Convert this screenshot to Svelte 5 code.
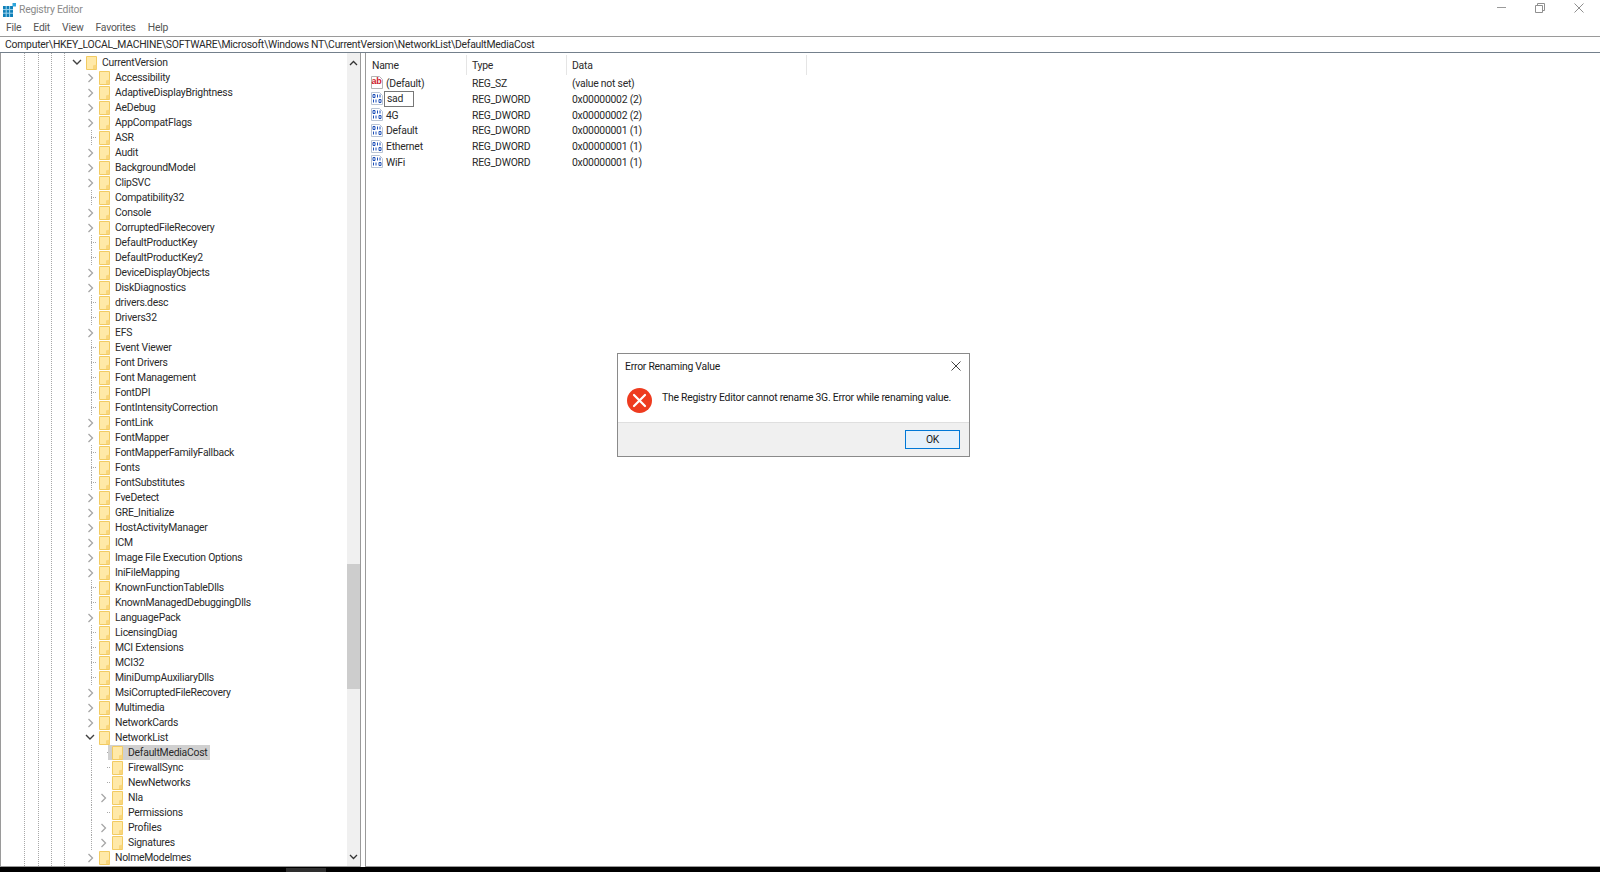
<script>
  const names = [
    ['Accessibility',1],['AdaptiveDisplayBrightness',1],['AeDebug',1],['AppCompatFlags',1],['ASR',0],['Audit',1],['BackgroundModel',1],['ClipSVC',1],['Compatibility32',0],['Console',1],['CorruptedFileRecovery',1],['DefaultProductKey',0],['DefaultProductKey2',0],['DeviceDisplayObjects',1],['DiskDiagnostics',1],['drivers.desc',0],['Drivers32',0],['EFS',1],['Event Viewer',0],['Font Drivers',0],['Font Management',0],['FontDPI',0],['FontIntensityCorrection',0],['FontLink',1],['FontMapper',1],['FontMapperFamilyFallback',0],['Fonts',0],['FontSubstitutes',0],['FveDetect',1],['GRE_Initialize',1],['HostActivityManager',1],['ICM',1],['Image File Execution Options',1],['IniFileMapping',1],['KnownFunctionTableDlls',0],['KnownManagedDebuggingDlls',0],['LanguagePack',1],['LicensingDiag',0],['MCI Extensions',0],['MCI32',0],['MiniDumpAuxiliaryDlls',0],['MsiCorruptedFileRecovery',1],['Multimedia',1],['NetworkCards',1]
  ];
  const rows = [
    { n: 'CurrentVersion', lvl: 0, k: 'open' },
    ...names.map(([n, c]) => ({ n, lvl: 1, k: c ? 'closed' : 'leaf' })),
    { n: 'NetworkList', lvl: 1, k: 'open' },
    { n: 'DefaultMediaCost', lvl: 2, k: 'leaf', sel: true },
    { n: 'FirewallSync', lvl: 2, k: 'leaf' },
    { n: 'NewNetworks', lvl: 2, k: 'leaf' },
    { n: 'Nla', lvl: 2, k: 'closed' },
    { n: 'Permissions', lvl: 2, k: 'leaf' },
    { n: 'Profiles', lvl: 2, k: 'closed' },
    { n: 'Signatures', lvl: 2, k: 'closed' },
    { n: 'NolmeModelmes', lvl: 1, k: 'closed' }
  ];
  const values = [
    { name: '(Default)', type: 'REG_SZ', data: '(value not set)', sz: true },
    { name: 'sad', type: 'REG_DWORD', data: '0x00000002 (2)', edit: true },
    { name: '4G', type: 'REG_DWORD', data: '0x00000002 (2)' },
    { name: 'Default', type: 'REG_DWORD', data: '0x00000001 (1)' },
    { name: 'Ethernet', type: 'REG_DWORD', data: '0x00000001 (1)' },
    { name: 'WiFi', type: 'REG_DWORD', data: '0x00000001 (1)' }
  ];
</script>

<div class="window">
  <header class="title">
    <svg class="logo" width="13" height="14" viewBox="0 0 13 14">
      <rect x="0" y="3" width="10" height="11" fill="#0f7fb8"/>
      <path d="M3.200 3v11M6.600 3v11M0 6.600h10M0 10.200h10" stroke="#9fd6ee" stroke-width="1"/>
      <rect x="9.500" y="0" width="3.500" height="3.500" fill="#2ea6dc"/>
    </svg>
    <span class="title-text">Registry Editor</span>
    <div class="controls">
      <svg width="9" height="2" viewBox="0 0 9 2"><path d="M0 .5h9" stroke="#9a9a9a"/></svg>
      <svg width="10" height="10" viewBox="0 0 10 10" fill="none" stroke="#8f8f8f"><path d="M.5 2.500h7v7h-7zM2.500 2.500v-2h7v7h-2"/></svg>
      <svg width="10" height="10" viewBox="0 0 10 10" fill="none" stroke="#8f8f8f"><path d="M.5.5l9 9M9.500.5l-9 9"/></svg>
    </div>
  </header>

  <nav class="menu">
    <span>File</span><span>Edit</span><span>View</span><span>Favorites</span><span>Help</span>
  </nav>

  <div class="address">Computer\HKEY_LOCAL_MACHINE\SOFTWARE\Microsoft\Windows NT\CurrentVersion\NetworkList\DefaultMediaCost</div>

  <main class="panes">
    <section class="tree-pane">
      <div class="tree">
        {#each rows as r}
          <div class="row" class:lvl1={r.lvl === 1} class:lvl2={r.lvl === 2}>
            <span class="exp">
              {#if r.k === 'closed'}
                <svg class="chev" width="7" height="10" viewBox="0 0 7 10" fill="none" stroke="#a6a6a6" stroke-width="1.3"><path d="M1.500 1l4 4-4 4"/></svg>
              {:else if r.k === 'open'}
                <svg class="chev-open" width="10" height="7" viewBox="0 0 10 7" fill="none" stroke="#404040" stroke-width="1.4"><path d="M1 1l4 4 4-4"/></svg>
              {:else}
                <i class="stub"></i>
              {/if}
            </span>
            <span class="item" class:sel={r.sel}>
              <svg class="folder" width="11" height="14" viewBox="0 0 11 14">
                <path d="M.5.5h10v13H.5z" fill="#ffe9a8" stroke="#f2cb62"/>
                <path d="M7 13V9.500l3.500-1V13z" fill="#f9d67c"/>
              </svg>
              <span class="label">{r.n}</span>
            </span>
          </div>
        {/each}
      </div>
      <div class="scrollbar">
        <svg width="9" height="6" viewBox="0 0 9 6" fill="none" stroke="#333" stroke-width="1.3"><path d="M1 5l3.500-3.500L8 5"/></svg>
        <div class="thumb"></div>
        <svg class="down" width="9" height="6" viewBox="0 0 9 6" fill="none" stroke="#333" stroke-width="1.3"><path d="M1 1l3.500 3.500L8 1"/></svg>
      </div>
    </section>

    <section class="list-pane">
      <div class="head">
        <span class="c1">Name</span><span class="c2">Type</span><span class="c3">Data</span>
      </div>
      {#each values as v}
        <div class="vrow">
          <span class="c1 namecell">
            {#if v.sz}
              <svg class="vicon" width="12" height="13" viewBox="0 0 12 13">
                <path d="M.5.5h8l3 3v9H.5z" fill="#fff" stroke="#b4b4b4"/>
                <text x="0.500" y="8" font-size="9" font-weight="700" fill="#d0202c" font-family="Liberation Sans">ab</text>
              </svg>
            {:else}
              <svg class="vicon" width="12" height="13" viewBox="0 0 12 13">
                <path d="M.5.5h8l3 3v9H.5z" fill="#fff" stroke="#b9c4d4"/>
                <path d="M2 2.500h2v3H2zM6.500 2.500v3M9 2.500v3M2.500 7.500v3M5 7.500v3M8 7.500h2v3H8z" fill="none" stroke="#1c4fb8" stroke-width="1"/>
              </svg>
            {/if}
            {#if v.edit}
              <span class="edit">{v.name}</span>
            {:else}
              <span class="vname">{v.name}</span>
            {/if}
          </span>
          <span class="c2">{v.type}</span>
          <span class="c3">{v.data}</span>
        </div>
      {/each}
    </section>
  </main>

  <footer class="taskbar"><span class="task"></span></footer>

  <div class="dialog">
    <div class="dlg-title">
      <span>Error Renaming Value</span>
      <svg width="10" height="10" viewBox="0 0 10 10" fill="none" stroke="#444"><path d="M.5.5l9 9M9.500.5l-9 9"/></svg>
    </div>
    <div class="dlg-body">
      <svg class="err" width="25" height="25" viewBox="0 0 25 25">
        <circle cx="12.500" cy="12.500" r="12.500" fill="#ee3b1f"/>
        <path d="M7 7l11 11M18 7L7 18" stroke="#fff" stroke-width="2.200" stroke-linecap="round"/>
      </svg>
      <p>The Registry Editor cannot rename 3G. Error while renaming value.</p>
    </div>
    <div class="dlg-foot"><button>OK</button></div>
  </div>
</div>

<style>
  :global(body) { margin: 0; background: #fff; }
  .window {
    position: relative;
    width: 1600px; height: 872px; overflow: hidden;
    display: flex; flex-direction: column;
    font: 10.4px/15px "Roboto", "Open Sans", sans-serif;
    letter-spacing: -0.24px;
    color: #2a2a2a; background: #fff;
  }
  .title { height: 19px; display: flex; align-items: center; padding-left: 3px; flex: none; }
  .logo { margin-right: 3px; }
  .title-text { color: #8a8a8a; }
  .controls { margin-left: auto; display: flex; align-items: center; gap: 29px; padding-right: 16px; padding-bottom: 3px; }
  .menu { height: 17px; display: flex; align-items: center; gap: 12px; padding-left: 6px; color: #555; flex: none; }
  .address {
    height: 17px; box-sizing: border-box; flex: none;
    border-top: 1px solid #9a9a9a; border-bottom: 1px solid #74808c;
    padding-left: 5px; line-height: 15px; white-space: nowrap;
  }
  .panes { flex: 1; display: flex; gap: 4px; min-height: 0; }
  .tree-pane {
    width: 361px; flex: none; box-sizing: border-box;
    border-left: 1px solid #9a9a9a; border-right: 1px solid #9a9a9a; border-bottom: 1px solid #9a9a9a;
    display: flex; overflow: hidden;
  }
  .tree {
    flex: 1; padding-top: 2px; overflow: hidden;
    background:
      linear-gradient(#a8a8a8 50%, transparent 50%) 23px 0 / 1px 2px repeat-y,
      linear-gradient(#a8a8a8 50%, transparent 50%) 37px 0 / 1px 2px repeat-y,
      linear-gradient(#a8a8a8 50%, transparent 50%) 50px 0 / 1px 2px repeat-y,
      linear-gradient(#a8a8a8 50%, transparent 50%) 63px 0 / 1px 2px repeat-y;
  }
  .row { height: 15px; display: flex; align-items: center; padding-left: 72px; white-space: nowrap; }
  .row.lvl1 { padding-left: 85px; }
  .row.lvl2 {
    padding-left: 98px;
    background: linear-gradient(#a8a8a8 50%, transparent 50%) 90px 0 / 1px 2px repeat-y;
  }
  .exp { width: 13px; height: 15px; display: flex; align-items: center; flex: none; }
  .chev { margin-left: 1px; }
  .chev-open { margin-left: -1px; }
  .stub {
    display: block; width: 6px; height: 1px; margin-left: 5px;
    background: linear-gradient(90deg, #a8a8a8 50%, transparent 50%) 0 0 / 2px 1px repeat-x;
  }
  .lvl1 .exp:has(.stub) {
    background: linear-gradient(#a8a8a8 50%, transparent 50%) 5px 0 / 1px 2px repeat-y;
  }
  .lvl2 .stub { width: 3px; margin-left: 8px; }
  .item { display: flex; align-items: center; height: 15px; margin-left: -4px; padding-left: 4px; padding-right: 3px; }
  .item.sel { background: #d0d0d0; }
  .folder { flex: none; }
  .label { margin-left: 5px; }
  .scrollbar {
    width: 13px; flex: none; background: #f0f0f0;
    display: flex; flex-direction: column; align-items: center; padding-top: 7px; box-sizing: border-box;
  }
  .thumb { width: 100%; height: 125px; margin-top: 498px; background: #cdcdcd; }
  .down { margin-top: auto; margin-bottom: 6px; }
  .list-pane {
    flex: 1; box-sizing: border-box; border-left: 1px solid #9a9a9a; border-bottom: 1px solid #9a9a9a;
    padding-top: 2px;
  }
  .head { height: 20px; display: flex; align-items: center; }
  .head .c1, .head .c2, .head .c3 { border-right: 1px solid #e5e5e5; height: 20px; line-height: 21px; }
  .c1 { width: 101px; padding-left: 6px; box-sizing: border-box; flex: none; }
  .c2 { width: 100px; padding-left: 5px; box-sizing: border-box; flex: none; }
  .c3 { width: 240px; padding-left: 5px; box-sizing: border-box; flex: none; }
  .vrow { height: 15.8px; box-sizing: border-box; display: flex; align-items: center; white-space: nowrap; padding-top: 1px; }
  .namecell { display: flex; align-items: center; padding-left: 5px; }
  .vicon { flex: none; margin-top: -1px; }
  .vname { margin-left: 3px; }
  .edit {
    flex: none; width: 30px; height: 16px; box-sizing: border-box; margin-left: 1px;
    border: 1px solid #777; background: #fff; padding-left: 2px; line-height: 14px;
  }
  .taskbar { height: 5px; background: #000; flex: none; padding-top: 1px; padding-left: 286px; box-sizing: border-box; }
  .task { display: block; width: 40px; height: 4px; background: #2e2e2e; }
  .dialog {
    position: absolute; left: 617px; top: 353px; width: 353px; height: 104px; box-sizing: border-box;
    border: 1px solid #8a8a8a; background: #fff; display: flex; flex-direction: column;
    color: #1a1a1a;
  }
  .dlg-title { height: 24px; display: flex; align-items: center; justify-content: space-between; padding: 0 8px 0 7px; flex: none; }
  .dlg-body { flex: 1; display: flex; align-items: center; padding: 0 9px; gap: 10px; }
  .err { flex: none; }
  .dlg-body p { margin: 0 0 5px; white-space: nowrap; }
  .dlg-foot { height: 34px; box-sizing: border-box; background: #f0f0f0; border-top: 1px solid #dfdfdf; display: flex; align-items: center; justify-content: flex-end; padding: 0 9px 0 0; flex: none; }
  button {
    width: 55px; height: 19px; border: 1px solid #0078d7; background: #e5f1fb; padding: 0;
    font: inherit; letter-spacing: inherit; color: #1a1a1a;
  }
</style>
